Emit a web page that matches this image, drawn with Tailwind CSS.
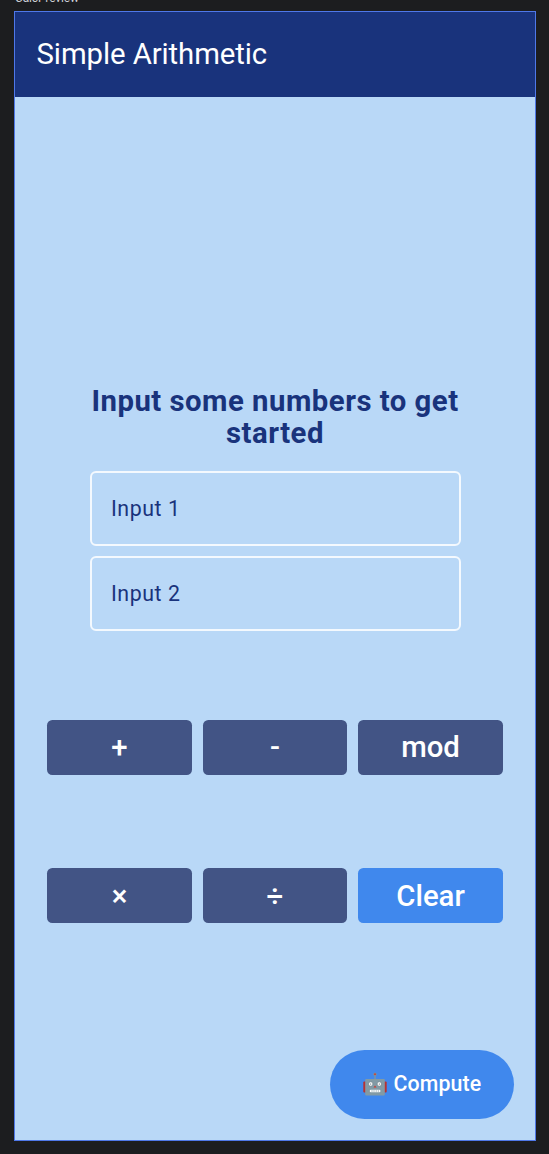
<!DOCTYPE html>
<html lang="en">
<head>
<meta charset="utf-8">
<title>Simple Arithmetic</title>
<script src="https://cdn.jsdelivr.net/npm/@tailwindcss/browser@4"></script>
</head>
<body class="h-[1154px] w-[549px] overflow-hidden bg-[#1c1d1f] pl-[14px] font-['Roboto',sans-serif]">
  <div class="flex h-[11px] flex-col justify-end overflow-hidden pb-[6px] pl-px text-[12px] leading-[14px] tracking-[-0.15px] text-[#ced0d6]"><span>CalcPreview</span></div>
  <main class="flex h-[1130px] w-[522px] flex-col border border-[#4f78e8] bg-[#b9d8f7]">
    <header class="flex h-[85px] shrink-0 items-center bg-[#19337c] pl-[21.5px]">
      <h1 class="text-[29.33px] leading-[37px] tracking-[-0.08px] text-white">Simple Arithmetic</h1>
    </header>
    <h2 class="mt-[288px] text-center text-[29.33px] leading-8 font-bold tracking-[0.49px] text-[#19337c]">Input some numbers to get<br>started</h2>
    <section class="mx-auto mt-[22px] flex w-[371px] flex-col gap-[10px]">
      <div class="flex h-[75px] items-center rounded-[6px] border-2 border-[#f4f9fe] pl-[19.5px] text-[21.33px] tracking-[0.56px] text-[#19337c]">Input 1</div>
      <div class="flex h-[75px] items-center rounded-[6px] border-2 border-[#f4f9fe] pl-[19.5px] text-[21.33px] tracking-[0.56px] text-[#19337c]">Input 2</div>
    </section>
    <section class="mt-[88.5px] ml-8 grid w-[456px] grid-cols-3 gap-x-[10.67px] gap-y-[93px] text-[29.33px] font-medium text-white">
      <button class="h-[55.33px] rounded-[5.33px] bg-[#425485] pt-[2px]">+</button>
      <button class="h-[55.33px] rounded-[5.33px] bg-[#425485] pt-[2px]">-</button>
      <button class="h-[55.33px] rounded-[5.33px] bg-[#425485] pt-[2px]">mod</button>
      <button class="h-[55.33px] rounded-[5.33px] bg-[#425485] pt-[2px]">×</button>
      <button class="h-[55.33px] rounded-[5.33px] bg-[#425485] pt-[2px]">÷</button>
      <button class="h-[55.33px] rounded-[5.33px] bg-[#4088ed] pt-[2px]">Clear</button>
    </section>
    <button class="mt-auto mr-[21px] mb-[21.5px] flex h-[69px] w-[184px] items-center self-end rounded-[36px] bg-[#4088ed] pl-[32.5px] text-[21.33px] font-medium tracking-[0.13px] text-white">
      <svg class="h-6 w-6 shrink-0" viewBox="0 0 24 24" aria-hidden="true">
        <path d="M12 2v6" stroke="#82959f" stroke-width="1.3"/>
        <circle cx="12" cy="2.2" r="1.7" fill="#78909c"/><circle cx="12" cy="2.2" r=".9" fill="#d3382f"/>
        <rect x=".3" y="9.5" width="3" height="11" rx="1" fill="#b83232"/>
        <rect x="20.7" y="9.5" width="3" height="11" rx="1" fill="#b83232"/>
        <rect x="2.2" y="7" width="19.6" height="16.5" rx="1" fill="#829aa5"/>
        <circle cx="7.7" cy="12" r="2.2" fill="white" stroke="#637983" stroke-width=".6"/>
        <circle cx="16.3" cy="12" r="2.2" fill="white" stroke="#637983" stroke-width=".6"/>
        <circle cx="7.7" cy="12" r=".55" fill="#33444c"/><circle cx="16.3" cy="12" r=".55" fill="#33444c"/>
        <path d="M12 13.5l1.5 2h-3z" fill="#d3382f"/>
        <rect x="6.8" y="17.7" width="10.6" height="2.6" rx="1" fill="white"/>
        <path d="M9 17.7v2.6M11 17.7v2.6M13.2 17.7v2.6M15.3 17.7v2.6" stroke="#829aa5" stroke-width=".6"/>
      </svg>
      <span class="ml-[7px]">Compute</span>
    </button>
  </main>
</body>
</html>
